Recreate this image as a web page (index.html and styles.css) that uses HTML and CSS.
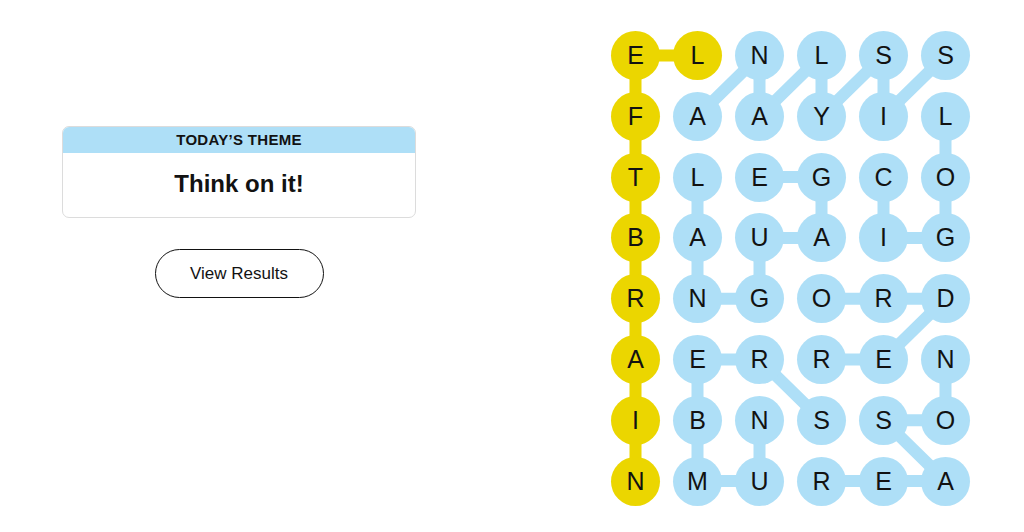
FILE: index.html
```html
<!DOCTYPE html>
<html lang="en">
<head>
    <meta charset="UTF-8">
    <meta name="viewport" content="width=device-width, initial-scale=1.0">
    <title>Strands</title>
    <link rel="stylesheet" href="styles.css">
</head>
<body>
    <div class="page">
        <!-- Theme and results -->
        <section class="info">
            <div class="theme-card">
                <h2 class="theme-label">TODAY’S THEME</h2>
                <p class="theme-text">Think on it!</p>
            </div>
            <button class="results-btn" type="button">View Results</button>
        </section>

        <!-- Letter board -->
        <section class="board">
            <svg class="links" width="359" height="475" viewBox="0 0 359 475">
                <polyline class="spangram" points="86.5,24.5 24.5,24.5 24.5,450.1"/>
                <polyline points="86.5,85.3 148.5,24.5 148.5,85.3 210.5,24.5 210.5,85.3 272.5,24.5 272.5,85.3 334.5,24.5"/>
                <polyline points="334.5,85.3 334.5,146.1 334.5,206.9 272.5,206.9 272.5,146.1"/>
                <polyline points="86.5,146.1 86.5,206.9 86.5,267.7 148.5,267.7 148.5,206.9 210.5,206.9 210.5,146.1 148.5,146.1"/>
                <polyline points="210.5,267.7 272.5,267.7 334.5,267.7 272.5,328.5 210.5,328.5"/>
                <polyline points="210.5,450.1 272.5,450.1 334.5,450.1 272.5,389.3 334.5,389.3 334.5,328.5"/>
                <polyline points="148.5,389.3 148.5,450.1 86.5,450.1 86.5,389.3 86.5,328.5 148.5,328.5 210.5,389.3"/>
            </svg>
            <div class="letters">
                <div class="cell gold">E</div><div class="cell gold">L</div><div class="cell">N</div><div class="cell">L</div><div class="cell">S</div><div class="cell">S</div>
                <div class="cell gold">F</div><div class="cell">A</div><div class="cell">A</div><div class="cell">Y</div><div class="cell">I</div><div class="cell">L</div>
                <div class="cell gold">T</div><div class="cell">L</div><div class="cell">E</div><div class="cell">G</div><div class="cell">C</div><div class="cell">O</div>
                <div class="cell gold">B</div><div class="cell">A</div><div class="cell">U</div><div class="cell">A</div><div class="cell">I</div><div class="cell">G</div>
                <div class="cell gold">R</div><div class="cell">N</div><div class="cell">G</div><div class="cell">O</div><div class="cell">R</div><div class="cell">D</div>
                <div class="cell gold">A</div><div class="cell">E</div><div class="cell">R</div><div class="cell">R</div><div class="cell">E</div><div class="cell">N</div>
                <div class="cell gold">I</div><div class="cell">B</div><div class="cell">N</div><div class="cell">S</div><div class="cell">S</div><div class="cell">O</div>
                <div class="cell gold">N</div><div class="cell">M</div><div class="cell">U</div><div class="cell">R</div><div class="cell">E</div><div class="cell">A</div>
            </div>
        </section>
    </div>
</body>
</html>
```

FILE: styles.css
```css
body {
    font-family: "Liberation Sans", Arial, sans-serif;
    margin: 0;
    padding: 0;
    background-color: #fff;
    color: #121212;
}

.page {
    display: flex;
    align-items: flex-start;
}

.info {
    width: 354px;
    margin-left: 62px;
    margin-top: 126px;
    display: flex;
    flex-direction: column;
    align-items: center;
}

.theme-card {
    width: 100%;
    box-sizing: border-box;
    border: 1px solid #dcdcdc;
    border-radius: 7px;
    overflow: hidden;
}

.theme-label {
    margin: 0;
    height: 26px;
    line-height: 26px;
    background-color: #aedff7;
    text-align: center;
    font-size: 15px;
    font-weight: bold;
    letter-spacing: 0.3px;
}

.theme-text {
    margin: 0;
    height: 64px;
    line-height: 62px;
    text-align: center;
    font-size: 24px;
    font-weight: bold;
}

.results-btn {
    margin-top: 31px;
    width: 169px;
    height: 49px;
    background: #fff;
    color: #121212;
    border: 1px solid #121212;
    border-radius: 25px;
    font-family: inherit;
    font-size: 17px;
    cursor: pointer;
}

.board {
    position: relative;
    margin-left: 195px;
    margin-top: 31px;
}

.links {
    position: absolute;
    top: 0;
    left: 0;
}

.links polyline {
    fill: none;
    stroke: #aedff7;
    stroke-width: 12;
    stroke-linejoin: round;
    stroke-linecap: round;
}

.links .spangram {
    stroke: #ebd600;
}

.letters {
    position: relative;
    display: grid;
    grid-template-columns: repeat(6, 49px);
    grid-auto-rows: 49px;
    column-gap: 13px;
    row-gap: 11.8px;
}

.cell {
    width: 49px;
    height: 49px;
    border-radius: 50%;
    background-color: #aedff7;
    display: flex;
    align-items: center;
    justify-content: center;
    font-size: 25px;
}

.cell.gold {
    background-color: #ebd600;
}
```
